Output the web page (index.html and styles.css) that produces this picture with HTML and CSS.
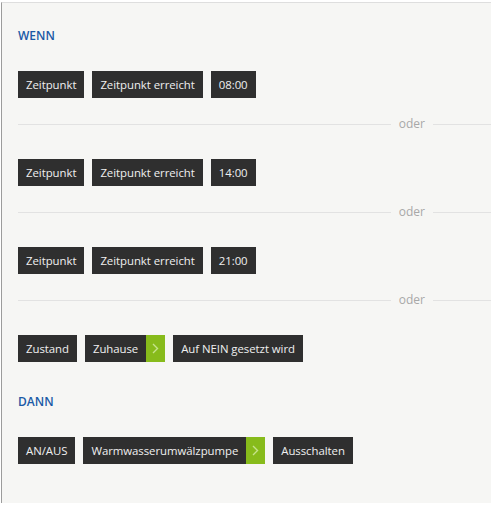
FILE: index.html
```html
<!DOCTYPE html>
<html lang="de">
<head>
<meta charset="utf-8">
<link rel="stylesheet" href="styles.css">
</head>
<body>
<div class="panel">
  <div class="heading">WENN</div>
  <div class="row first">
    <span class="chip">Zeitpunkt</span>
    <span class="chip">Zeitpunkt erreicht</span>
    <span class="chip">08:00</span>
  </div>
  <div class="sep"><span class="line"></span><span class="or">oder</span><span class="line end"></span></div>
  <div class="row">
    <span class="chip">Zeitpunkt</span>
    <span class="chip">Zeitpunkt erreicht</span>
    <span class="chip">14:00</span>
  </div>
  <div class="sep"><span class="line"></span><span class="or">oder</span><span class="line end"></span></div>
  <div class="row">
    <span class="chip">Zeitpunkt</span>
    <span class="chip">Zeitpunkt erreicht</span>
    <span class="chip">21:00</span>
  </div>
  <div class="sep"><span class="line"></span><span class="or">oder</span><span class="line end"></span></div>
  <div class="row">
    <span class="chip">Zustand</span>
    <span class="chip link"><span class="label">Zuhause</span><span class="go"><svg width="7" height="11" viewBox="0 0 7 11"><path d="M1 1 L5.5 5.5 L1 10" fill="none" stroke="#c6e38c" stroke-width="1.4"/></svg></span></span>
    <span class="chip">Auf NEIN gesetzt wird</span>
  </div>
  <div class="heading second">DANN</div>
  <div class="row first">
    <span class="chip">AN/AUS</span>
    <span class="chip link"><span class="label">Warmwasserumwälzpumpe</span><span class="go"><svg width="7" height="11" viewBox="0 0 7 11"><path d="M1 1 L5.5 5.5 L1 10" fill="none" stroke="#c6e38c" stroke-width="1.4"/></svg></span></span>
    <span class="chip">Ausschalten</span>
  </div>
</div>
</body>
</html>
```
FILE: styles.css
```css
html, body {
  margin: 0;
  padding: 0;
  background: #ffffff;
}
body {
  font-family: "Open Sans", "Liberation Sans", sans-serif;
  height: 505px;
  overflow: hidden;
}
.panel {
  margin: 2px 0 0 1px;
  border-top: 1px solid #dedede;
  border-left: 1px solid #9c9c9c;
  background: #f6f6f4;
  height: 501px;
  padding: 25px 0 0 16px;
  box-sizing: border-box;
}
.heading {
  font-size: 12px;
  font-weight: 600;
  line-height: 16px;
  color: #1b5aa6;
}
.heading.second {
  margin-top: 32px;
}
.row {
  display: flex;
  gap: 8px;
  margin-top: 27px;
}
.chip {
  display: flex;
  height: 27px;
  line-height: 27px;
  padding: 0 8px;
  background: #2f2f2f;
  color: #f0f0f0;
  font-size: 11.4px;
  letter-spacing: -0.05px;
  white-space: nowrap;
}
.chip.link {
  padding-right: 0;
}
.chip .label {
  padding-right: 8px;
}
.go {
  width: 19px;
  background: #87bb1b;
  display: flex;
  align-items: center;
  justify-content: center;
}
.sep {
  display: flex;
  align-items: center;
  height: 16px;
  margin-top: 18px;
}
.line {
  flex: 1;
  height: 1px;
  background: #e2e2e2;
}
.line.end {
  flex: 0 0 58px;
}
.or {
  padding: 0 8px;
  font-size: 12px;
  color: #a8a8a8;
  line-height: 16px;
}
```
